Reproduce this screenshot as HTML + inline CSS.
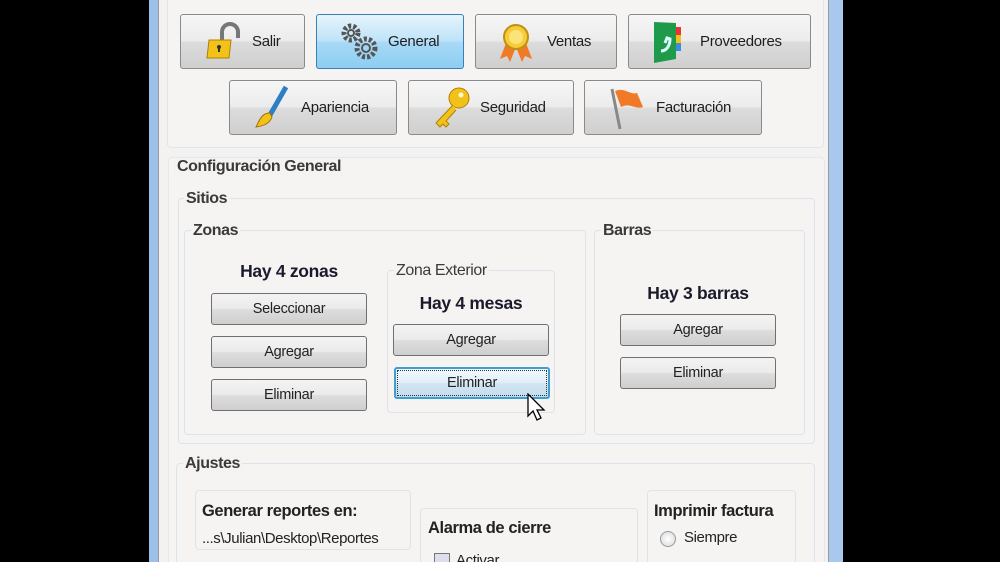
<!DOCTYPE html><html><head><meta charset="utf-8"><style>
*{margin:0;padding:0;box-sizing:border-box}
html,body{width:1000px;height:562px;overflow:hidden}
body{background:#000;position:relative;font-family:"Liberation Sans",sans-serif;color:#222}
#w{position:absolute;left:0;top:0;width:1000px;height:562px;overflow:hidden}
.a{position:absolute}
.win{left:149px;top:0;width:694px;height:562px;background:linear-gradient(90deg,#9cc0e8,#c9defa 40%,#a9c8ee)}
.in{left:158px;top:0;width:671px;height:562px;background:#f4f2f1;border-left:1px solid #9a9a9a;border-right:1px solid #9a9a9a}
.grp{position:absolute;border:1px solid #dde3ea;border-radius:4px;background:#f6f4f3}
.t{position:absolute;font-size:16px;font-weight:bold;color:#3a3a3a;background:#f5f3f2;padding:0 2px;white-space:nowrap;letter-spacing:-0.4px}
.bb{position:absolute;border:1px solid #8a8a8a;border-radius:3px;background:linear-gradient(#f6f6f6,#ececec 48%,#dcdcdc 52%,#cfcfcf);font-size:15px;display:flex;align-items:center;color:#1e1e1e;letter-spacing:-0.3px}
.bb.sel{background:linear-gradient(#e6f4fc,#bfe3f8 48%,#a8d9f6 52%,#8ccdf2);border-color:#3c7fb1}
.sb{position:absolute;width:156px;height:32px;border:1px solid #707070;border-radius:3px;background:linear-gradient(#f3f3f3,#ebebeb 48%,#dddddd 52%,#cfcfcf);font-size:14.5px;text-align:center;line-height:30px;color:#222;letter-spacing:-0.3px}
.h{position:absolute;font-size:17.5px;font-weight:bold;color:#1a1a2a;text-align:center;letter-spacing:-0.3px}
.ic{position:absolute}
.tx{position:absolute;letter-spacing:-0.4px;white-space:nowrap}
</style></head><body><div id="w">
<div class="a win"></div>
<div class="a in"></div>
<div class="grp" style="left:167px;top:-4px;width:657px;height:152px;border-color:#dfe5ec"></div>

<div class="bb" style="left:180px;top:14px;width:125px;height:55px"><svg class="ic" style="left:24px;top:6px" width="40" height="40" viewBox="0 0 40 40"><path d="M17 20V11a8 8 0 0 1 16 0v6" fill="none" stroke="#777" stroke-width="4"/><path d="M4 19h22l-2 18H2z" fill="#f2c21b" stroke="#b08000"/><circle cx="14" cy="26" r="2" fill="#333"/><rect x="13" y="26" width="2" height="5" fill="#333"/></svg><span style="position:absolute;left:71px">Salir</span></div>
<div class="bb sel" style="left:316px;top:14px;width:148px;height:55px"><svg class="ic" style="left:20px;top:5px" width="46" height="44" viewBox="0 0 46 44"><g fill="none" stroke="#555" stroke-width="2"><circle cx="14" cy="13" r="7" stroke-dasharray="3 2" stroke-width="5"/><circle cx="14" cy="13" r="3"/><circle cx="29" cy="28" r="9" stroke-dasharray="3 2" stroke-width="5"/><circle cx="29" cy="28" r="4"/></g></svg><span style="position:absolute;left:71px">General</span></div>
<div class="bb" style="left:475px;top:14px;width:142px;height:55px"><svg class="ic" style="left:20px;top:6px" width="40" height="42" viewBox="0 0 40 42"><path d="M10 22L4 38l7-3 3 6 6-15M30 22l6 16-7-3-3 6-6-15" fill="#f07a28"/><circle cx="20" cy="16" r="12" fill="#f6cc3a" stroke="#c09010" stroke-width="2"/><circle cx="20" cy="16" r="7" fill="#fbe37a"/></svg><span style="position:absolute;left:71px">Ventas</span></div>
<div class="bb" style="left:628px;top:14px;width:183px;height:55px"><svg class="ic" style="left:22px;top:4px" width="36" height="46" viewBox="0 0 36 46"><rect x="24" y="8" width="6" height="8" fill="#e33"/><rect x="24" y="16" width="6" height="8" fill="#f2c21b"/><rect x="24" y="24" width="6" height="8" fill="#3a8de0"/><path d="M3 3l22 1v36L3 44z" fill="#1f9a4a"/><path d="M10 32c6 0 9-6 9-12l-3-1-2 5" fill="none" stroke="#dff" stroke-width="3"/></svg><span style="position:absolute;left:71px">Proveedores</span></div>

<div class="bb" style="left:229px;top:80px;width:168px;height:55px"><svg class="ic" style="left:22px;top:4px" width="40" height="46" viewBox="0 0 40 46"><path d="M34 2L18 30" stroke="#2b7fc2" stroke-width="5"/><path d="M18 28c-8 0-10 6-14 14 8-1 14-4 16-10z" fill="#f2c21b" stroke="#a07000"/></svg><span style="position:absolute;left:71px">Apariencia</span></div>
<div class="bb" style="left:408px;top:80px;width:166px;height:55px"><svg class="ic" style="left:22px;top:4px" width="40" height="46" viewBox="0 0 40 46"><circle cx="28" cy="13" r="10" fill="#f2c21b" stroke="#b08000"/><circle cx="30" cy="10" r="2.5" fill="#fff8d0"/><path d="M22 20L5 38l4 4 3-3 3 3 3-3-3-3 10-11" fill="#f2c21b" stroke="#b08000"/></svg><span style="position:absolute;left:71px">Seguridad</span></div>
<div class="bb" style="left:584px;top:80px;width:178px;height:55px"><svg class="ic" style="left:22px;top:4px" width="40" height="46" viewBox="0 0 40 46"><path d="M5 4l8 40" stroke="#888" stroke-width="3"/><path d="M8 6c10-4 14 4 22 2l6 14c-8 3-12-5-22 0z" fill="#f07a28"/></svg><span style="position:absolute;left:71px">Facturación</span></div>

<div class="grp" style="left:168px;top:157px;width:657px;height:420px;border-color:#e3e8ee"></div>
<div class="t" style="left:175px;top:158px">Configuración General</div>
<div class="grp" style="left:178px;top:198px;width:637px;height:246px"></div>
<div class="t" style="left:184px;top:190px">Sitios</div>
<div class="grp" style="left:184px;top:230px;width:402px;height:205px"></div>
<div class="t" style="left:191px;top:222px">Zonas</div>
<div class="h" style="left:211px;top:261px;width:156px">Hay 4 zonas</div>
<div class="sb" style="left:211px;top:293px">Seleccionar</div>
<div class="sb" style="left:211px;top:336px">Agregar</div>
<div class="sb" style="left:211px;top:379px">Eliminar</div>
<div class="grp" style="left:387px;top:270px;width:168px;height:143px"></div>
<div class="t" style="left:394px;top:262px;font-weight:normal;font-size:16px">Zona Exterior</div>
<div class="h" style="left:393px;top:293px;width:156px">Hay 4 mesas</div>
<div class="sb" style="left:393px;top:324px">Agregar</div>
<div class="sb" style="left:394px;top:367px;border:2px solid #3c9fd0;background:linear-gradient(#f0f8fd,#e2eff8 48%,#d2e6f3 52%,#c4ddee);line-height:28px;outline:1px dotted #333;outline-offset:-4px">Eliminar</div>
<svg class="ic" style="left:526px;top:393px" width="22" height="30" viewBox="0 0 22 30"><path d="M2 1v22l5-5 4 9 4-2-4-8h7z" fill="#fff" stroke="#000" stroke-width="1.3"/></svg>
<div class="grp" style="left:594px;top:230px;width:211px;height:205px"></div>
<div class="t" style="left:601px;top:222px">Barras</div>
<div class="h" style="left:620px;top:283px;width:156px">Hay 3 barras</div>
<div class="sb" style="left:620px;top:314px">Agregar</div>
<div class="sb" style="left:620px;top:357px">Eliminar</div>

<div class="grp" style="left:176px;top:463px;width:639px;height:110px"></div>
<div class="t" style="left:183px;top:455px">Ajustes</div>
<div class="grp" style="left:195px;top:490px;width:216px;height:60px"></div>
<div class="tx" style="left:202px;top:502px;font-size:16.5px;font-weight:bold;color:#222">Generar reportes en:</div>
<div class="tx" style="left:202px;top:530px;font-size:15px;color:#222">...s\Julian\Desktop\Reportes</div>
<div class="grp" style="left:420px;top:508px;width:218px;height:70px"></div>
<div class="tx" style="left:428px;top:519px;font-size:16.5px;font-weight:bold;color:#222">Alarma de cierre</div>
<div class="a" style="left:434px;top:553px;width:16px;height:16px;border:1px solid #777;background:#dde"></div>
<div class="tx" style="left:456px;top:552px;font-size:15px">Activar</div>
<div class="grp" style="left:647px;top:490px;width:149px;height:80px"></div>
<div class="tx" style="left:654px;top:502px;font-size:16.5px;font-weight:bold;color:#222">Imprimir factura</div>
<div class="a" style="left:660px;top:531px;width:16px;height:16px;border:1px solid #999;border-radius:50%;background:radial-gradient(#fff,#d8d8d8)"></div>
<div class="tx" style="left:684px;top:529px;font-size:15px">Siempre</div>
</div></body></html>
